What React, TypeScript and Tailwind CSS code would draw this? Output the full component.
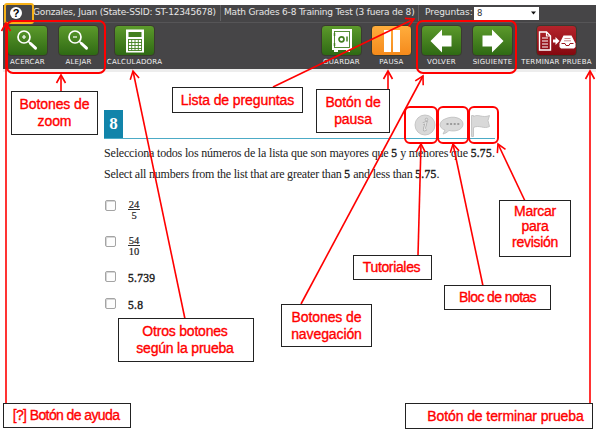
import React from "react";

type ToolProps = { label: string; tone?: string; place: string; tracking?: string; children: React.ReactNode };

const GREEN = "from-[#5c9a2b] to-[#2f6a14]";
const ORANGE = "from-[#ffad3c] to-[#f58a1a]";
const CRIMSON = "from-[#b5232b] to-[#84080f]";

function Tool({ label, tone = GREEN, place, tracking = "tracking-[0.25px]", children }: ToolProps) {
  return (
    <div className={`flex w-[41px] shrink-0 flex-col items-center ${place}`}>
      <div className={`flex h-[31px] w-[41px] items-center justify-center rounded-[4px] border border-[#3a3a30] bg-gradient-to-b ${tone}`}>
        {children}
      </div>
      <span className={`mt-[2px] whitespace-nowrap font-['DejaVu_Sans',sans-serif] text-[7px] leading-[9px] text-[#f0f0f0] ${tracking}`}>{label}</span>
    </div>
  );
}

function Magnifier({ plus }: { plus?: boolean }) {
  return (
    <svg width="24" height="24" viewBox="0 0 24 24" fill="none" stroke="#fff" className="-ml-[2px] -mt-[2px]">
      <circle cx="9" cy="9" r="6" strokeWidth="1.7" />
      <path d="M13.5 13.5l2 2" strokeWidth="1.7" />
      <path d="M15.5 15.5l5 4.700" strokeWidth="3" strokeLinecap="round" />
      <path d={plus ? "M7 9h4M9 7v4" : "M7 9h4"} strokeWidth="1.2" />
    </svg>
  );
}

function CalcIcon() {
  return (
    <svg width="20" height="24" viewBox="0 0 20 24">
      <rect x="1" y="0.5" width="18" height="23" fill="#fff" />
      <rect x="3.5" y="3" width="13" height="5" fill="#438020" />
      <path d="M3 10.5h14M3 13.5h14M3 16.5h14M3 19.5h14M3.5 10.5v11M6.7 10.5v11M10 10.5v11M13.3 10.5v11M16.5 10.5v11M3 21.5h14" stroke="#438020" strokeWidth="0.9" />
    </svg>
  );
}

function SafeIcon() {
  return (
    <svg width="22" height="25" viewBox="0 0 22 25">
      <path d="M1 1h20v21h-2v2h-4v-2H7v2H3v-2H1z" fill="#fff" />
      <rect x="3.5" y="3.5" width="15" height="16" fill="none" stroke="#438020" strokeWidth="0.9" />
      <circle cx="10.5" cy="11.3" r="2.5" fill="none" stroke="#438020" strokeWidth="1.7" />
      <path d="M3.5 5v3M3.5 15v3M16 8.5v5" stroke="#438020" strokeWidth="1.5" />
    </svg>
  );
}

function ArrowIcon({ flip }: { flip?: boolean }) {
  return (
    <svg width="23" height="24" viewBox="0 0 23 24" className={flip ? "-scale-x-100" : ""}>
      <path d="M0.5 12L12 0.500v6h9.500v11H12v6z" fill="#fff" />
    </svg>
  );
}

function SubmitIcon() {
  return (
    <svg width="38" height="22" viewBox="0 0 38 22" className="shrink-0">
      <path d="M1.5 2h7l4 4v14h-11z" fill="none" stroke="#fff" strokeWidth="1.4" />
      <path d="M8.5 2v4h4M4 8h6M4 11h6M4 14h6M4 17h6" stroke="#fff" strokeWidth="1.2" fill="none" />
      <path d="M15 9.5h2.500V7l4 4-4 4v-2.500h-2.500z" fill="#fff" />
      <path d="M25.500 5.500h8l4 8v3.500l-1.500 1.500h-13L21.500 17v-3.500z" fill="#fff" />
      <path d="M23.500 13.500h3.500l1 2h3l1-2h3.500" stroke="#9b1820" fill="none" />
      <path d="M26.500 8.500h6M26 10.800h7" stroke="#c0686c" strokeWidth="0.8" />
    </svg>
  );
}

function Fraction({ top, bottom }: { top: string; bottom: string }) {
  return (
    <span className="flex w-[12px] flex-col items-center text-[10.500px] leading-[10px] [-webkit-text-stroke:0.2px_#222]">
      <span className="flex h-[10px] w-full justify-center border-b border-[#333]">{top}</span>
      <span className="mt-[1px]">{bottom}</span>
    </span>
  );
}

function Option({ height, children }: { height: string; children: React.ReactNode }) {
  return (
    <div className={`flex items-start ${height}`}>
      <span className="ml-px h-[11px] w-[11px] shrink-0 rounded-[2px] border border-[#a4a4a4] bg-[#fdfdfd] shadow-[inset_1px_1px_0_#d6d6d6]" />
      <span className="ml-[12px] flex">{children}</span>
    </div>
  );
}

function Num({ children }: { children: React.ReactNode }) {
  return <span className="text-[11.500px] tracking-[0.3px] [-webkit-text-stroke:0.4px_#222]">{children}</span>;
}

type NoteProps = { place: string; lines: string[]; leading?: string; tracking?: string };

function Note({ place, lines, leading = "leading-[17px]", tracking = "tracking-[-0.1px]" }: NoteProps) {
  return (
    <div className={`absolute flex flex-col items-center justify-center whitespace-nowrap border border-[#222] bg-white text-[14px] text-[#ff0000] [-webkit-text-stroke:0.35px_#ff0000] ${leading} ${tracking} ${place}`}>
      {lines.map((line) => (
        <span key={line}>{line}</span>
      ))}
    </div>
  );
}

const ARROWS = [
  [6, 404, 6, 23],
  [61, 92, 61, 75],
  [185, 319, 133, 71],
  [273, 87, 414, 19],
  [388, 90, 388, 71],
  [301, 304, 423, 76],
  [418, 255, 421, 144],
  [483, 286, 453, 144],
  [525, 201, 498, 144],
  [590, 404, 590, 71],
];

function Arrow({ points }: { points: number[] }) {
  const [x1, y1, x2, y2] = points;
  const angle = (Math.atan2(y2 - y1, x2 - x1) * 180) / Math.PI;
  return (
    <g>
      <path d={`M${x1} ${y1}L${x2} ${y2}`} />
      <path d="M-8 -4.500L0 0L-8 4.500" transform={`translate(${x2} ${y2}) rotate(${angle})`} />
    </g>
  );
}

export default function App() {
  return (
    <div className="relative h-[435px] w-[600px] overflow-hidden bg-white pl-[3px] pt-[5px] font-['Liberation_Sans',Arial,sans-serif]">
      <header className="h-[67px] w-[593px] border-b-[3px] border-[#ededed] bg-[#464547]">
        <div className="flex h-[18px] items-center border-b border-[#565557] pb-[1px] font-['DejaVu_Sans',sans-serif] text-[9px] text-[#e6e6e6]">
          <span className="ml-[7px] flex h-[12px] w-[12px] shrink-0 items-center justify-center rounded-full bg-white font-['Liberation_Sans',sans-serif] text-[11px] font-bold leading-none text-black">?</span>
          <span className="ml-[11px] w-[187px] shrink-0 whitespace-nowrap tracking-[-0.17px]">Gonzales, Juan (State-SSID: ST-12345678)</span>
          <span className="flex h-full w-[198px] shrink-0 items-center whitespace-nowrap border-l border-[#626163] pl-[3px] tracking-[-0.19px]">Math Grades 6-8 Training Test (3 fuera de 8)</span>
          <span className="flex h-full w-[56px] shrink-0 items-center border-l border-[#626163] pl-[6px] tracking-[-0.05px]">Preguntas:</span>
          <span className="flex h-[13px] w-[65px] shrink-0 items-center justify-between bg-white pl-[3px] pr-[3px] text-[8.500px] text-[#333]">
            8
            <svg width="5" height="4" viewBox="0 0 5 4"><path d="M0 0.500h5L2.500 3.500z" fill="#111" /></svg>
          </span>
        </div>
        <div className="flex pt-[2px]">
          <Tool label="ACERCAR" place="ml-[4px]"><Magnifier plus /></Tool>
          <Tool label="ALEJAR" place="ml-[10px]"><Magnifier /></Tool>
          <Tool label="CALCULADORA" place="ml-[15px]"><CalcIcon /></Tool>
          <Tool label="GUARDAR" place="ml-[166px]"><SafeIcon /></Tool>
          <Tool label="PAUSA" tone={ORANGE} place="ml-[9px]">
            <span className="flex gap-[2px]">
              <span className="h-[22px] w-[7px] bg-white" />
              <span className="h-[22px] w-[7px] bg-white" />
            </span>
          </Tool>
          <Tool label="VOLVER" place="ml-[9px]"><ArrowIcon /></Tool>
          <Tool label="SIGUIENTE" place="ml-[10px]"><ArrowIcon flip /></Tool>
          <Tool label="TERMINAR PRUEBA" tone={CRIMSON} place="ml-[23px]"><SubmitIcon /></Tool>
        </div>
      </header>

      <main className="ml-[101px] mt-[38px] w-[391px] font-['Liberation_Serif','Times_New_Roman',serif] text-[#222]">
        <div className="flex h-[29px] items-start justify-between border-b border-[#4cabc6]">
          <span className="flex h-[28px] w-[19px] items-center justify-center bg-[#1184aa] text-[17px] font-bold text-white">8</span>
          <svg width="78" height="27" viewBox="0 0 78 27" className="mr-[3px] mt-[2px]" fill="#d9d9d9" stroke="#bdbdbd" strokeWidth="0.8">
            <circle cx="11" cy="13" r="10" />
            <path d="M9 11.500l3-.8-1.800 6.800c0 1 1 .6 2-.5" fill="none" stroke="#aaa" strokeWidth="2.600" />
            <path d="M9 11.500l3-.8-1.800 6.800c0 1 1 .6 2-.5" fill="none" stroke="#e4e4e4" strokeWidth="1.200" />
            <circle cx="12.500" cy="7.500" r="1.300" fill="#e4e4e4" stroke="#aaa" />
            <path d="M29 22l2-4c-7-2-6-9 0-11 8-4 18-1 18 5s-8 8-14 6.500c-2 2-4 3-6 3.500z" />
            <path d="M32.500 12h13" stroke="#888" strokeWidth="1.600" strokeDasharray="2 1.600" />
            <path d="M57.500 3.500h2v1c5-3 9 2 16-1l-1.500 5 1.500 6c-6 3-10-2-16 1v9h-2z" />
          </svg>
        </div>
        <p className="mt-[7px] whitespace-nowrap text-[12px] leading-[15px] tracking-[-0.18px]">
          Selecciona todos los números de la lista que son mayores que <Num>5</Num> y menores que <Num>5.75</Num>.
        </p>
        <p className="mt-[6px] whitespace-nowrap text-[12px] leading-[15px] tracking-[-0.21px]">
          Select all numbers from the list that are greater than <Num>5</Num> and less than <Num>5.75</Num>.
        </p>
        <div className="mt-[18px] flex flex-col">
          <Option height="h-[36px]"><Fraction top="24" bottom="5" /></Option>
          <Option height="h-[35px]"><Fraction top="54" bottom="10" /></Option>
          <Option height="h-[27px]"><span className="leading-[12px]"><Num>5.739</Num></span></Option>
          <Option height="h-[12px]"><span className="leading-[12px]"><Num>5.8</Num></span></Option>
        </div>
      </main>

      <div className="absolute left-[4px] top-[3px] h-[21px] w-[30px] rounded-[3px] border-2 border-[#f8b217]" />
      <div className="absolute left-[6px] top-[20px] h-[54px] w-[100px] rounded-[7px] border-[2.500px] border-[#ff0000]" />
      <div className="absolute left-[416px] top-[20px] h-[54px] w-[101px] rounded-[7px] border-[2.500px] border-[#ff0000]" />
      <div className="absolute left-[404px] top-[106px] h-[38px] w-[34px] rounded-[6px] border-[2.500px] border-[#ff0000]" />
      <div className="absolute left-[437px] top-[106px] h-[38px] w-[32px] rounded-[6px] border-[2.500px] border-[#ff0000]" />
      <div className="absolute left-[468px] top-[106px] h-[38px] w-[31px] rounded-[6px] border-[2.500px] border-[#ff0000]" />

      <svg width="600" height="435" viewBox="0 0 600 435" className="absolute left-0 top-0" fill="none" stroke="#ff0000" strokeWidth="1.600">
        {ARROWS.map((points) => (
          <Arrow key={points.join()} points={points} />
        ))}
      </svg>

      <Note place="left-[11px] top-[91px] h-[44px] w-[87px]" lines={["Botones de", "zoom"]} />
      <Note place="left-[172px] top-[87px] h-[26px] w-[131px]" lines={["Lista de preguntas"]} />
      <Note place="left-[316px] top-[89px] h-[44px] w-[74px]" lines={["Botón de", "pausa"]} />
      <Note place="left-[353px] top-[255px] h-[25px] w-[79px] pr-[2px]" lines={["Tutoriales"]} tracking="tracking-[-0.35px]" />
      <Note place="left-[444px] top-[285px] h-[25px] w-[107px]" lines={["Bloc de notas"]} tracking="tracking-[-0.6px]" />
      <Note place="left-[499px] top-[200px] h-[57px] w-[72px] pb-[3px]" lines={["Marcar", "para", "revisión"]} leading="leading-[15.500px]" tracking="tracking-[-0.3px]" />
      <Note place="left-[118px] top-[318px] h-[44px] w-[136px] pr-[2px]" lines={["Otros botones", "según la prueba"]} tracking="tracking-[-0.2px]" />
      <Note place="left-[281px] top-[304px] h-[43px] w-[91px]" lines={["Botones de", "navegación"]} />
      <Note place="left-[3px] top-[403px] h-[25px] w-[128px] pr-[2px]" lines={["[?] Botón de ayuda"]} tracking="tracking-[-0.6px]" />
      <Note place="left-[405px] top-[403px] h-[26px] w-[188px] pl-[13px]" lines={["Botón de terminar prueba"]} />
    </div>
  );
}
